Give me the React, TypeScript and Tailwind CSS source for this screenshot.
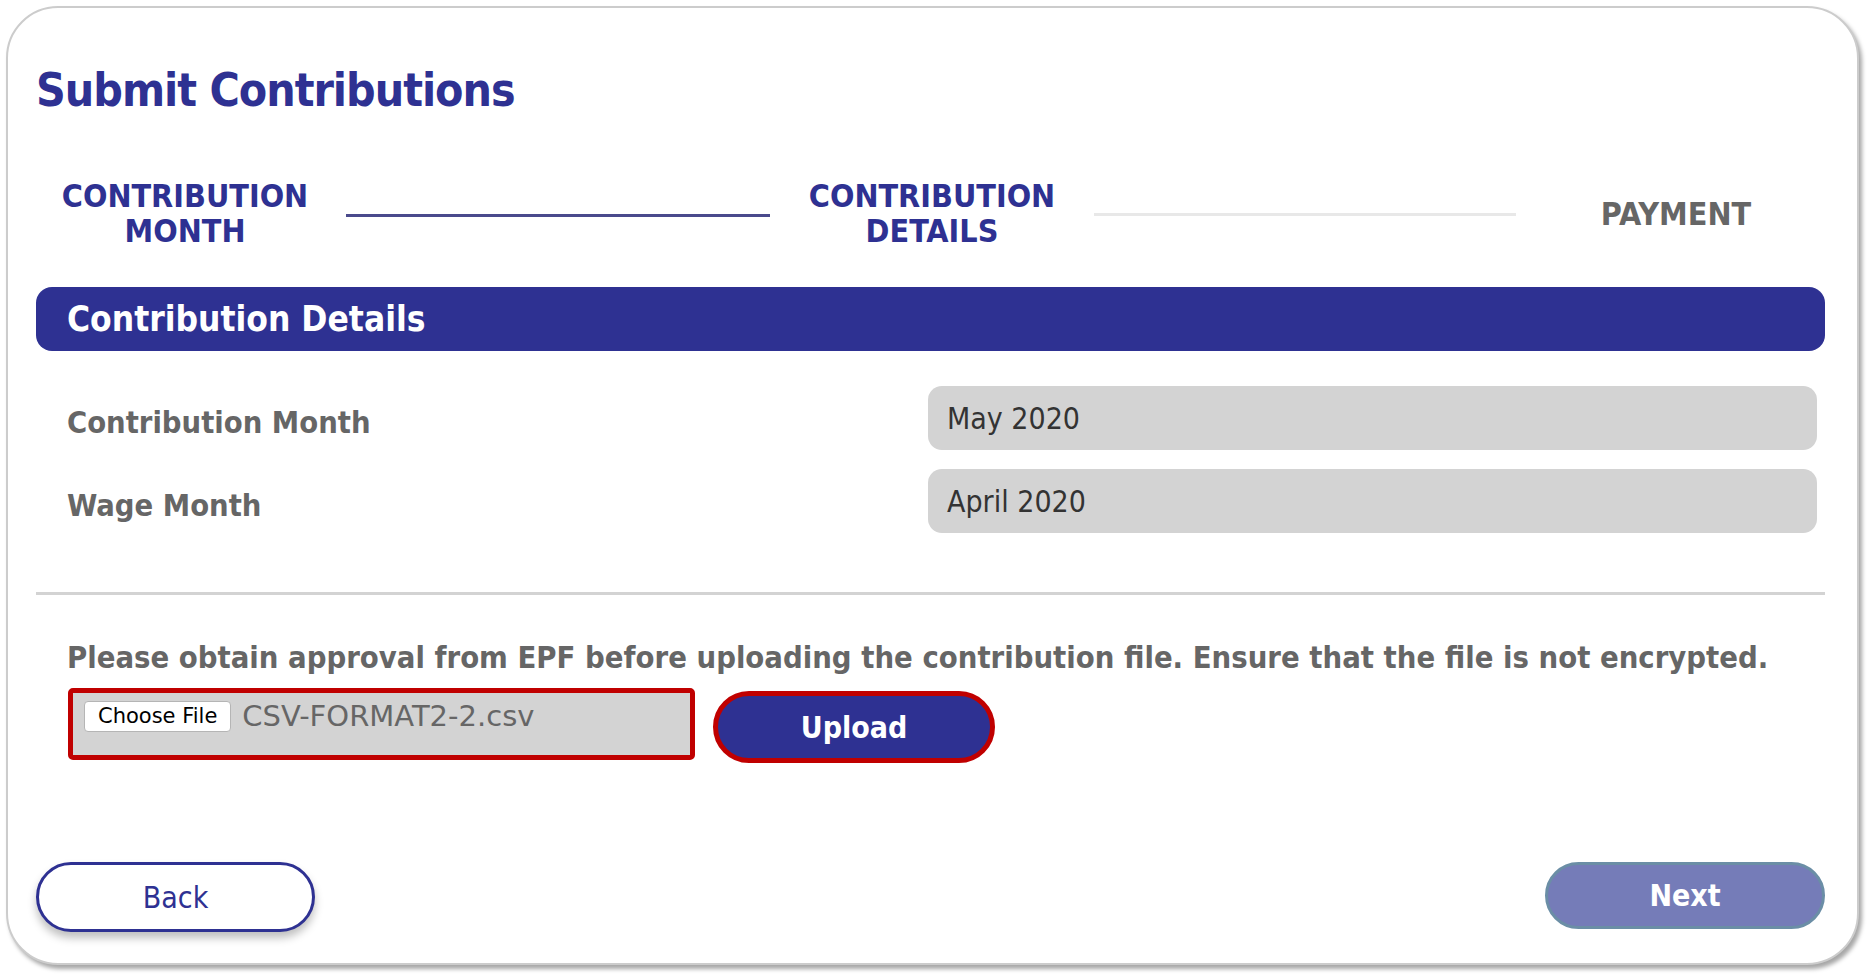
import React from "react";

const font = { fontFamily: '"DejaVu Sans Condensed", "DejaVu Sans", Verdana, sans-serif' };
const wide = { fontFamily: '"DejaVu Sans", Verdana, sans-serif' };

function Steps() {
  return (
    <div className="grid grid-cols-[298px_424px_300px_422px_296px] gap-x-3 items-center mt-[52px] h-[84px]">
      <div className="text-center text-[32px] leading-[35px] font-bold text-[#2e3192]">
        CONTRIBUTION
        <br />
        MONTH
      </div>
      <div className="h-[3px] bg-[#4a4a8c] mt-[2px]" />
      <div className="text-center text-[32px] leading-[35px] font-bold text-[#2e3192]">
        CONTRIBUTION
        <br />
        DETAILS
      </div>
      <div className="h-[3px] bg-[#e8e8e8]" />
      <div className="text-center text-[32px] leading-[35px] font-bold text-[#666666]">PAYMENT</div>
    </div>
  );
}

function Field({ label, value }: { label: string; value: string }) {
  return (
    <div className="flex items-center">
      <div className="w-[892px] pl-[31px] pt-[10px] text-[30.6px] font-bold text-[#666666]">{label}</div>
      <div className="w-[889px] h-[64px] rounded-[14px] bg-[#d3d3d3] flex items-center pl-[19px] text-[30px] text-[#333333]">
        {value}
      </div>
    </div>
  );
}

export default function App() {
  return (
    <div className="w-[1872px] h-[978px] bg-white pt-[6px] pl-[6px]" style={font}>
      <div className="w-[1853px] h-[959px] rounded-[52px] border-2 border-[#cccccc] bg-white shadow-[3px_4px_4px_rgba(0,0,0,0.35)] px-[28px] pt-[52px]">
        <h1 className="text-[46px] leading-[60px] font-bold tracking-[-1px] text-[#2e3192]">Submit Contributions</h1>

        <Steps />

        <div className="mt-[31px] h-[64px] w-[1789px] rounded-[16px] bg-[#2e3192] flex items-center pl-[31px] text-[35px] font-bold text-white">
          Contribution Details
        </div>

        <div className="mt-[35px] flex flex-col gap-[19px]">
          <Field label="Contribution Month" value="May 2020" />
          <Field label="Wage Month" value="April 2020" />
        </div>

        <div className="mt-[59px] h-[3px] w-[1789px] bg-[#d3d3d3]" />

        <p className="mt-[42px] pl-[31px] text-[30.7px] leading-[42px] font-bold text-[#666666]">
          Please obtain approval from EPF before uploading the contribution file. Ensure that the file is not encrypted.
        </p>

        <div className="mt-[9px] pl-[32px] flex items-start gap-[18px]">
          <div className="w-[627px] h-[72px] rounded-[5px] border-[5px] border-[#c00000] bg-[#d3d3d3] flex items-start pt-[8px] pl-[11px] gap-[11px]" style={wide}>
            <span className="h-[31px] px-[13px] rounded-[4px] border border-[#b5b5b5] bg-white flex items-center text-[21px] text-black">
              Choose File
            </span>
            <span className="text-[29px] leading-[31px] text-[#666666]">CSV-FORMAT2-2.csv</span>
          </div>
          <button className="mt-[3px] w-[282px] h-[72px] rounded-full border-[5px] border-[#c00000] bg-[#2e3192] text-white text-[30px] font-bold">
            Upload
          </button>
        </div>

        <div className="mt-[99px] flex items-start justify-between w-[1789px]">
          <button className="w-[279px] h-[70px] rounded-full border-[3px] border-[#2e3192] bg-white text-[30px] text-[#2e3192] shadow-[0_6px_8px_rgba(0,0,0,0.25)]">
            Back
          </button>
          <button className="w-[280px] h-[67px] rounded-full border-[3px] border-[#6b8ea6] bg-[#757cb8] text-[30px] font-bold text-white">
            Next
          </button>
        </div>
      </div>
    </div>
  );
}
